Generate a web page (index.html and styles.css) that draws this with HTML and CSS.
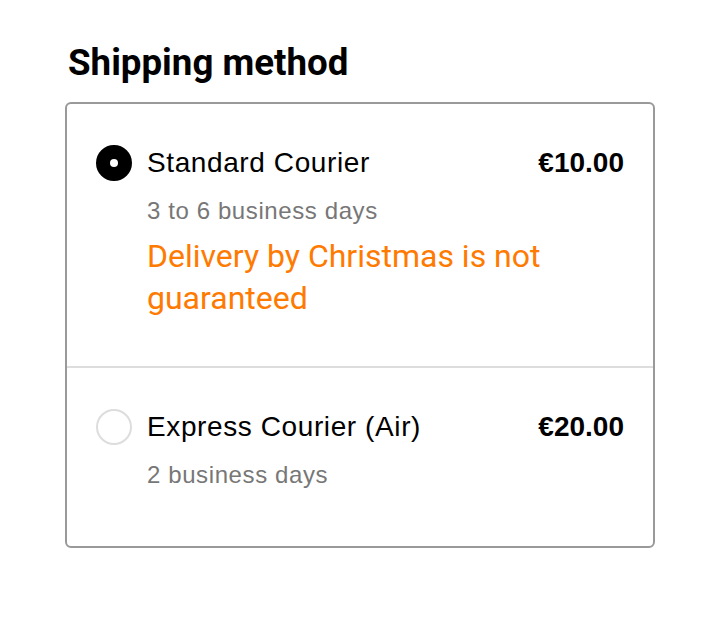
FILE: index.html
```html
<!DOCTYPE html>
<html lang="en">
<head>
    <meta charset="UTF-8">
    <title>Shipping method</title>
    <link rel="stylesheet" href="styles.css">
</head>
<body>
    <div class="checkout">
        <h1>Shipping method</h1>

        <div class="methods">
            <label class="method">
                <span class="radio radio-checked"></span>
                <div class="method-info">
                    <div class="method-head">
                        <span class="method-name">Standard Courier</span>
                        <span class="method-price">€10.00</span>
                    </div>
                    <div class="method-time">3 to 6 business days</div>
                    <div class="method-note">Delivery by Christmas is not guaranteed</div>
                </div>
            </label>

            <label class="method">
                <span class="radio"></span>
                <div class="method-info">
                    <div class="method-head">
                        <span class="method-name">Express Courier (Air)</span>
                        <span class="method-price">€20.00</span>
                    </div>
                    <div class="method-time">2 business days</div>
                </div>
            </label>
        </div>
    </div>
</body>
</html>
```

FILE: styles.css
```css
:root {
    --text-primary: #000000;
    --text-secondary: #777777;
    --warning-color: #ff7a00;
    --border-color: #999999;
    --divider-color: #dddddd;
}

* {
    margin: 0;
    padding: 0;
    box-sizing: border-box;
}

body {
    font-family: "Liberation Sans", Arial, sans-serif;
    color: var(--text-primary);
    background: #ffffff;
}

.checkout {
    width: 590px;
    margin-left: 65px;
    padding-top: 41px;
}

h1 {
    font-family: Roboto, sans-serif;
    font-size: 36.7px;
    font-weight: 700;
    line-height: 44px;
    margin-left: 3px;
    margin-bottom: 17px;
}

.methods {
    border: 2px solid var(--border-color);
    border-radius: 6px;
}

.method {
    display: flex;
    align-items: flex-start;
    gap: 15px;
    padding: 41px 29px 47px 29px;
}

.method + .method {
    border-top: 2px solid var(--divider-color);
}

.method:last-child {
    padding-bottom: 57px;
}

.radio {
    flex: none;
    width: 36px;
    height: 36px;
    border-radius: 50%;
    border: 2px solid var(--divider-color);
    display: flex;
    align-items: center;
    justify-content: center;
}

.radio-checked {
    background: #000000;
    border-color: #000000;
}

.radio-checked::after {
    content: "";
    width: 8px;
    height: 8px;
    border-radius: 50%;
    background: #ffffff;
}

.method-info {
    flex: 1;
}

.method-head {
    display: flex;
    justify-content: space-between;
    align-items: center;
    height: 36px;
    font-size: 28px;
    letter-spacing: 0.6px;
}

.method-price {
    font-weight: 700;
    font-size: 28px;
    letter-spacing: 0;
}

.method-time {
    margin-top: 16px;
    font-size: 24px;
    line-height: 28px;
    letter-spacing: 0.6px;
    color: var(--text-secondary);
}

.method-note {
    margin-top: 10px;
    font-family: Roboto, sans-serif;
    font-size: 32px;
    line-height: 42px;
    color: var(--warning-color);
}
```
